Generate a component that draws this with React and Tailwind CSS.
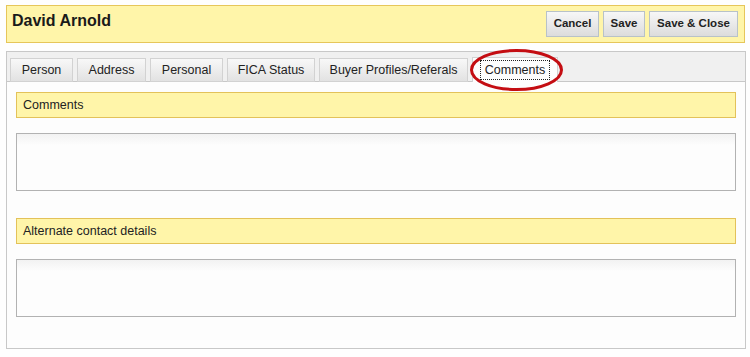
import React from 'react';

const tabs = [
  { label: 'Person', w: 'w-[63px]' },
  { label: 'Address', w: 'w-[69px]' },
  { label: 'Personal', w: 'w-[73px]' },
  { label: 'FICA Status', w: 'w-[88px]' },
  { label: 'Buyer Profiles/Referals', w: 'w-[149px]' },
];

const buttons = [
  { label: 'Cancel', w: 'w-[53px]' },
  { label: 'Save', w: 'w-[42px]' },
  { label: 'Save & Close', w: 'w-[89px]' },
];

const Section = ({ title }) => (
  <div>
    <div className="h-[26px] border border-[#e3c25a] bg-[#fff5a9] flex items-center pl-[6px] text-[12.5px] text-[#222]">
      {title}
    </div>
    <div className="mt-[15px] h-[58px] border border-[#b2b2b2] bg-gradient-to-b from-[#f2f2f2] via-[#fdfdfd] via-20% to-[#fdfdfd]"></div>
  </div>
);

export default function App() {
  return (
    <div className="w-[750px] h-[357px] bg-[#fefefe] font-['Liberation_Sans',Arial,sans-serif] relative overflow-hidden pt-[5px] px-[6px]">
      {/* Header */}
      <div className="w-[739px] h-[38px] border border-[#e6c65a] bg-[#fff5a9] flex items-center justify-between pl-[5px] pr-[6px]">
        <h1 className="text-[16px] font-bold text-[#1a1a1a] -mt-[6px]">David Arnold</h1>
        <div className="flex gap-[4px]">
          {buttons.map((b) => (
            <button
              key={b.label}
              className={`${b.w} h-[26px] border border-[#b8c2c8] bg-gradient-to-b from-[#f7f7f7] to-[#dcdcdc] text-[11.5px] font-bold text-[#222] flex items-center justify-center`}
            >
              {b.label}
            </button>
          ))}
        </div>
      </div>

      {/* Tab panel */}
      <div className="mt-[8px] w-[740px] h-[298px] border border-[#c8c8c8] bg-[#fdfdfd]">
        <div className="h-[30px] bg-[#f0f0f0] border-b border-[#c8c8c8] flex items-end gap-[4px] pl-[3px]">
          {tabs.map((t) => (
            <div
              key={t.label}
              className={`${t.w} h-[24px] -mb-px border border-[#d2d2d2] bg-gradient-to-b from-[#f8f8f8] to-[#e2e2e2] flex items-center justify-center text-[12.5px] text-[#222]`}
            >
              {t.label}
            </div>
          ))}
          <div className="w-[86px] h-[25px] -mb-px border border-b-0 border-[#d2d2d2] bg-[#fdfdfd] flex items-center justify-center text-[12.5px] text-[#222]">
            <span className="outline-1 outline-dotted outline-[#222] w-[68px] text-center leading-[18px]">Comments</span>
          </div>
        </div>
        <div className="px-[9px] pt-[10px] flex flex-col gap-[27px]">
          <Section title="Comments" />
          <Section title="Alternate contact details" />
        </div>
      </div>

      {/* Red annotation ellipse */}
      <svg className="absolute left-[468px] top-[48px]" width="98" height="44" viewBox="0 0 98 44">
        <ellipse cx="48.5" cy="22" rx="45" ry="19.5" fill="none" stroke="#c40d12" strokeWidth="3" />
      </svg>
    </div>
  );
}
